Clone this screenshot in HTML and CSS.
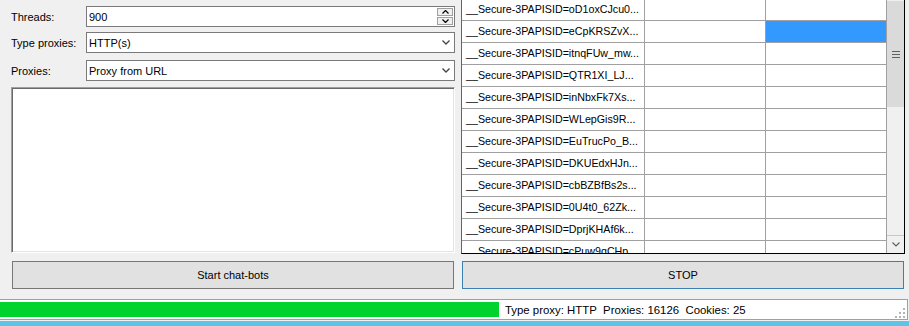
FILE: index.html
```html
<!DOCTYPE html>
<html lang="en">
<head>
    <meta charset="UTF-8">
    <title>Chat-bots</title>
    <link rel="stylesheet" href="styles.css">
</head>
<body>
    <div class="main">
        <div class="left">
            <div class="field field-threads">
                <label>Threads:</label>
                <div class="box spin">
                    <span class="value">900</span>
                    <div class="spin-btns">
                        <div class="spin-btn"><svg width="7" height="4" viewBox="0 0 7 4"><polyline points="0.5,3.5 3.5,0.5 6.5,3.5" fill="none" stroke="#000" stroke-width="1.2"/></svg></div>
                        <div class="spin-btn"><svg width="7" height="4" viewBox="0 0 7 4"><polyline points="0.5,0.5 3.5,3.5 6.5,0.5" fill="none" stroke="#000" stroke-width="1.2"/></svg></div>
                    </div>
                </div>
            </div>
            <div class="field field-type">
                <label>Type proxies:</label>
                <div class="box combo">
                    <span class="value">HTTP(s)</span>
                    <svg class="drop" width="8" height="5" viewBox="0 0 8 5"><polyline points="0.5,0.5 4,4 7.5,0.5" fill="none" stroke="#444" stroke-width="1.3"/></svg>
                </div>
            </div>
            <div class="field field-proxies">
                <label>Proxies:</label>
                <div class="box combo">
                    <span class="value">Proxy from URL</span>
                    <svg class="drop" width="8" height="5" viewBox="0 0 8 5"><polyline points="0.5,0.5 4,4 7.5,0.5" fill="none" stroke="#444" stroke-width="1.3"/></svg>
                </div>
            </div>
            <div class="memo"></div>
        </div>

        <div class="right">
            <div class="grid">
                <div class="grid-view">
                    <div class="row"><div class="cell">__Secure-3PAPISID=oD1oxCJcu0...</div><div class="cell"></div><div class="cell"></div></div>
                    <div class="row"><div class="cell">__Secure-3PAPISID=eCpKRSZvX...</div><div class="cell"></div><div class="cell selected"></div></div>
                    <div class="row"><div class="cell">__Secure-3PAPISID=itnqFUw_mw...</div><div class="cell"></div><div class="cell"></div></div>
                    <div class="row"><div class="cell">__Secure-3PAPISID=QTR1XI_LJ...</div><div class="cell"></div><div class="cell"></div></div>
                    <div class="row"><div class="cell">__Secure-3PAPISID=inNbxFk7Xs...</div><div class="cell"></div><div class="cell"></div></div>
                    <div class="row"><div class="cell">__Secure-3PAPISID=WLepGis9R...</div><div class="cell"></div><div class="cell"></div></div>
                    <div class="row"><div class="cell">__Secure-3PAPISID=EuTrucPo_B...</div><div class="cell"></div><div class="cell"></div></div>
                    <div class="row"><div class="cell">__Secure-3PAPISID=DKUEdxHJn...</div><div class="cell"></div><div class="cell"></div></div>
                    <div class="row"><div class="cell">__Secure-3PAPISID=cbBZBfBs2s...</div><div class="cell"></div><div class="cell"></div></div>
                    <div class="row"><div class="cell">__Secure-3PAPISID=0U4t0_62Zk...</div><div class="cell"></div><div class="cell"></div></div>
                    <div class="row"><div class="cell">__Secure-3PAPISID=DprjKHAf6k...</div><div class="cell"></div><div class="cell"></div></div>
                    <div class="row"><div class="cell">__Secure-3PAPISID=cPuw9qCHp...</div><div class="cell"></div><div class="cell"></div></div>
                </div>
                <div class="vscroll">
                    <div class="thumb">
                        <svg width="8" height="7" viewBox="0 0 8 7"><rect x="0" y="0" width="8" height="1" fill="#606060"/><rect x="0" y="3" width="8" height="1" fill="#606060"/><rect x="0" y="6" width="8" height="1" fill="#606060"/></svg>
                    </div>
                    <div class="arrow-down">
                        <svg width="8" height="5" viewBox="0 0 8 5"><polyline points="0.5,0.5 4,4 7.5,0.5" fill="none" stroke="#606060" stroke-width="1.2"/></svg>
                    </div>
                </div>
            </div>
        </div>
    </div>

    <div class="actions">
        <button class="btn btn-start">Start chat-bots</button>
        <button class="btn btn-stop">STOP</button>
    </div>

    <div class="statusbar">
        <div class="progress"></div>
        <span class="status-text">Type proxy: HTTP&nbsp; Proxies: 16126&nbsp; Cookies: 25</span>
        <svg class="grip" width="11" height="10" viewBox="0 0 11 10">
            <rect x="8" y="0" width="2" height="2" fill="#b4b4b4"/>
            <rect x="4" y="4" width="2" height="2" fill="#b4b4b4"/>
            <rect x="8" y="4" width="2" height="2" fill="#b4b4b4"/>
            <rect x="0" y="8" width="2" height="2" fill="#b4b4b4"/>
            <rect x="4" y="8" width="2" height="2" fill="#b4b4b4"/>
            <rect x="8" y="8" width="2" height="2" fill="#b4b4b4"/>
        </svg>
    </div>
    <div class="taskbar"></div>
</body>
</html>
```

FILE: styles.css
```css
body {
    margin: 0;
    width: 909px;
    height: 326px;
    overflow: hidden;
    background-color: #f0f0f0;
    font-family: "Liberation Sans", Arial, sans-serif;
    font-size: 11px;
    color: #000;
}
.main {
    display: flex;
    height: 254px;
}
.left {
    width: 444px;
    margin-left: 11px;
}
.field {
    display: flex;
    align-items: center;
    height: 21px;
}
.field-threads {
    margin-top: 6px;
}
.field-type {
    margin-top: 5px;
}
.field-proxies {
    margin-top: 7px;
}
.field label {
    width: 75px;
}
.box {
    box-sizing: border-box;
    width: 369px;
    height: 21px;
    border: 1px solid #7a7a7a;
    background: white;
    display: flex;
    align-items: center;
    padding-left: 2px;
}
.box .value {
    flex: 1;
}
.spin-btns {
    display: flex;
    flex-direction: column;
    gap: 1px;
    margin-right: 1px;
}
.spin-btn {
    box-sizing: border-box;
    width: 16px;
    height: 8px;
    border: 1px solid #a0a0a0;
    background: #f0f0f0;
    display: flex;
    align-items: center;
    justify-content: center;
}
.drop {
    margin-right: 4px;
}
.memo {
    box-sizing: border-box;
    margin-top: 6px;
    height: 166px;
    background: white;
    border: 1px solid;
    border-color: #a0a0a0 white white #a0a0a0;
    box-shadow: inset 1px 1px #696969, inset -1px -1px #e3e3e3;
}
.right {
    margin-left: 6px;
}
.grid {
    box-sizing: border-box;
    display: flex;
    width: 444px;
    height: 254px;
    border-left: 1px solid #646464;
    border-right: 1px solid #000;
    border-bottom: 1px solid #000;
    background: white;
}
.grid-view {
    width: 425px;
    overflow: hidden;
}
.row {
    display: grid;
    grid-template-columns: 183px 121px 121px;
    height: 22px;
}
.row:first-child {
    margin-top: -1px;
}
.cell {
    box-sizing: border-box;
    border-right: 1px solid #a0a0a0;
    border-bottom: 1px solid #a0a0a0;
    padding-left: 4px;
    line-height: 21px;
    font-size: 10.7px;
    white-space: nowrap;
    overflow: hidden;
    background: white;
}
.cell.selected {
    background-color: #3399ff;
}
.vscroll {
    width: 17px;
    display: flex;
    flex-direction: column;
    background: #f0f0f0;
}
.thumb {
    height: 107px;
    background: #dadada;
    border-top: 1px solid #f0f0f0;
    display: flex;
    align-items: center;
    justify-content: center;
    box-sizing: border-box;
}
.arrow-down {
    margin-top: auto;
    height: 17px;
    border-top: 1px solid #c8c8c8;
    display: flex;
    align-items: center;
    justify-content: center;
}
.actions {
    display: flex;
    gap: 8px;
    margin-top: 7px;
    padding-left: 12px;
}
.btn {
    box-sizing: border-box;
    width: 442px;
    height: 28px;
    padding: 0;
    border: 1px solid #777;
    background-color: #e1e1e1;
    font-family: "Liberation Sans", Arial, sans-serif;
    font-size: 11px;
    color: #000;
}
.btn-stop {
    border-color: #3c7fb1;
}
.statusbar {
    box-sizing: border-box;
    display: flex;
    align-items: center;
    width: 908px;
    height: 21px;
    margin-top: 10px;
    background: white;
    border-top: 1px solid #a0a0a0;
    border-bottom: 1px solid #a0a0a0;
    border-right: 1px solid #a0a0a0;
}
.progress {
    width: 499px;
    height: 15px;
    background-color: #00d22e;
}
.status-text {
    margin-left: 6px;
    font-size: 11.4px;
}
.grip {
    margin-left: auto;
    margin-right: 1px;
    margin-top: 6px;
}
.taskbar {
    margin-top: 1px;
    height: 6px;
    background-color: #5ec4e7;
}
```
